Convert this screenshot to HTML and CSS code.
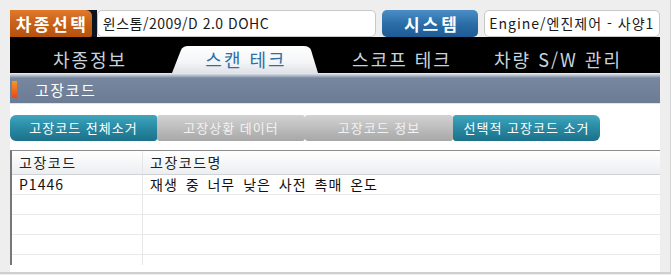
FILE: index.html
```html
<!DOCTYPE html>
<html lang="ko">
<head>
<meta charset="utf-8">
<link rel="stylesheet" href="styles.css">
</head>
<body>
<div class="frame">
  <div class="toprow">
    <div class="btn-orange-wrap"><div class="btn-orange">차종선택</div></div>
    <div class="field field-car">윈스톰/2009/D 2.0 DOHC</div>
    <div class="btn-blue">시스템</div>
    <div class="field field-sys">Engine/엔진제어 - 사양1</div>
  </div>
  <div class="tabs">
    <div class="tab">차종정보</div>
    <div class="tab active">
      <svg class="tab-shape" width="156" height="28" viewBox="0 0 156 28" preserveAspectRatio="none">
        <defs>
          <linearGradient id="tg" x1="0" y1="0" x2="0" y2="1">
            <stop offset="0" stop-color="#ffffff"/>
            <stop offset="0.6" stop-color="#f4f5f7"/>
            <stop offset="1" stop-color="#dfe2e7"/>
          </linearGradient>
        </defs>
        <path d="M4 28 L13 5 Q15 1 20 1 L136 1 Q141 1 143 5 L150 28 Z" fill="url(#tg)"/>
      </svg>
      <span class="tab-label">스캔 테크</span>
    </div>
    <div class="tab">스코프 테크</div>
    <div class="tab">차량 S/W 관리</div>
  </div>
  <div class="panel">
    <div class="section-head">
      <span class="mark"></span>
      <span class="section-title">고장코드</span>
    </div>
    <div class="actions">
      <div class="act teal first">고장코드 전체소거</div>
      <div class="act gray">고장상황 데이터</div>
      <div class="act gray">고장코드 정보</div>
      <div class="act teal last">선택적 고장코드 소거</div>
    </div>
    <div class="grid">
      <div class="row head">
        <div class="c1">고장코드</div>
        <div class="c2">고장코드명</div>
      </div>
      <div class="row">
        <div class="c1">P1446</div>
        <div class="c2">재생 중 너무 낮은 사전 촉매 온도</div>
      </div>
      <div class="row"><div class="c1"></div><div class="c2"></div></div>
      <div class="row"><div class="c1"></div><div class="c2"></div></div>
      <div class="row"><div class="c1"></div><div class="c2"></div></div>
      <div class="row"><div class="c1"></div><div class="c2"></div></div>
    </div>
  </div>
</div>
</body>
</html>
```

FILE: styles.css
```css
* { box-sizing: border-box; }
html, body {
  margin: 0;
  padding: 0;
}
body {
  width: 671px;
  height: 275px;
  background: #eeeeee;
  font-family: "Noto Sans CJK KR", "Liberation Sans", sans-serif;
  overflow: hidden;
}
.frame {
  height: 275px;
  padding: 10px 10px 0 10px;
  border: 1px solid #d4d4d4;
  border-top-color: #e4e4e4;
  border-bottom: 2px solid #cfcfcf;
  display: flex;
  flex-direction: column;
  margin-left: -1px;
  margin-top: -1px;
  width: 672px;
}
.toprow {
  display: flex;
  height: 27px;
}
.btn-orange-wrap {
  width: 87px;
  background: #0c1420;
  display: flex;
}
.btn-orange {
  width: 82px;
  height: 27px;
  background: linear-gradient(#e27a2c 0%, #c9621a 45%, #b5520e 100%);
  border-top-right-radius: 6px;
  border-bottom-right-radius: 2px;
  color: #fff;
  font-weight: bold;
  font-size: 17px;
  line-height: 27px;
  text-align: center;
  letter-spacing: 2.5px;
  padding-left: 2px;
  white-space: nowrap;
}
.field {
  height: 27px;
  background: #fff;
  border: 1px solid #c8c8c8;
  border-radius: 5px;
  font-size: 14px;
  color: #1a1a1a;
  line-height: 25px;
  padding-left: 5px;
  white-space: nowrap;
  overflow: hidden;
}
.field-car { width: 280px; letter-spacing: 0.5px; }
.btn-blue {
  width: 96px;
  margin-left: 6px;
  margin-right: 6px;
  height: 27px;
  background: linear-gradient(#4b8ec6 0%, #2c6ea8 50%, #1d5b94 100%);
  border-radius: 5px;
  color: #fff;
  font-weight: bold;
  font-size: 17px;
  line-height: 27px;
  text-align: center;
  letter-spacing: 3px;
  padding-left: 3px;
}
.field-sys { width: 176px; padding-left: 4px; letter-spacing: 1px; }
.tabs {
  height: 36px;
  background: #000;
  display: flex;
  padding-left: 2px;
}
.tab {
  width: 156px;
  height: 36px;
  display: flex;
  align-items: flex-end;
  justify-content: center;
  padding-bottom: 3px;
  color: #c9d3dd;
  font-size: 18px;
  line-height: 22px;
  position: relative;
  letter-spacing: 2px;
  white-space: nowrap;
}
.tab.active { color: #2f6fa6; }
.tab-shape {
  position: absolute;
  left: 0;
  bottom: 0;
}
.tab-label { position: relative; }
.panel {
  flex: 1;
  background: #fff;
  display: flex;
  flex-direction: column;
}
.section-head {
  height: 31px;
  background: linear-gradient(#eef0f3 0px, #a9b3c2 3px, #7787a0 5px, #6c7c95 100%);
  border-bottom: 1px solid #e0e4ea;
  display: flex;
  align-items: center;
  padding-top: 3px;
}
.mark {
  width: 5px;
  height: 17px;
  margin-left: 2px;
  background: linear-gradient(#f59a22, #e8461c);
}
.section-title {
  margin-left: 18px;
  color: #fff;
  font-size: 15px;
  letter-spacing: 1.5px;
}
.actions {
  display: flex;
  margin-top: 11px;
  height: 26px;
}
.act {
  width: 148px;
  height: 26px;
  border-radius: 3px;
  font-size: 13px;
  line-height: 26px;
  text-align: center;
  color: #fff;
  letter-spacing: 1px;
  white-space: nowrap;
}
.act.first { width: 147px; border-radius: 6px 3px 3px 6px; }
.act.last { width: 147px; border-radius: 3px 6px 6px 3px; }
.teal {
  background: linear-gradient(#41a6bd 0%, #2a8ca6 45%, #1c7189 100%);
}
.gray {
  background: linear-gradient(#d2d2d2 0%, #bdbdbd 50%, #a7a7a7 100%);
  color: #f2f2f2;
}
.grid {
  margin-top: 9px;
  height: 115px;
  overflow: hidden;
  border-left: 2px solid #777;
  border-top: 1px solid #8c8c8c;
}
.row {
  display: flex;
  height: 20px;
  border-bottom: 1px solid #e9e9e9;
  font-size: 14px;
  color: #111;
  line-height: 19px;
  letter-spacing: 1px;
  word-spacing: 3px;
  white-space: nowrap;
}
.row.head {
  height: 24px;
  background: linear-gradient(#ffffff 0%, #f7f8f9 40%, #eceef0 100%);
  border-bottom: 1px solid #cfd2d6;
  line-height: 23px;
  color: #222;
  letter-spacing: 1.5px;
}
.c1 {
  width: 131px;
  padding-left: 7px;
  border-right: 1px solid #e6e6e6;
}
.c2 {
  flex: 1;
  padding-left: 7px;
}
```
